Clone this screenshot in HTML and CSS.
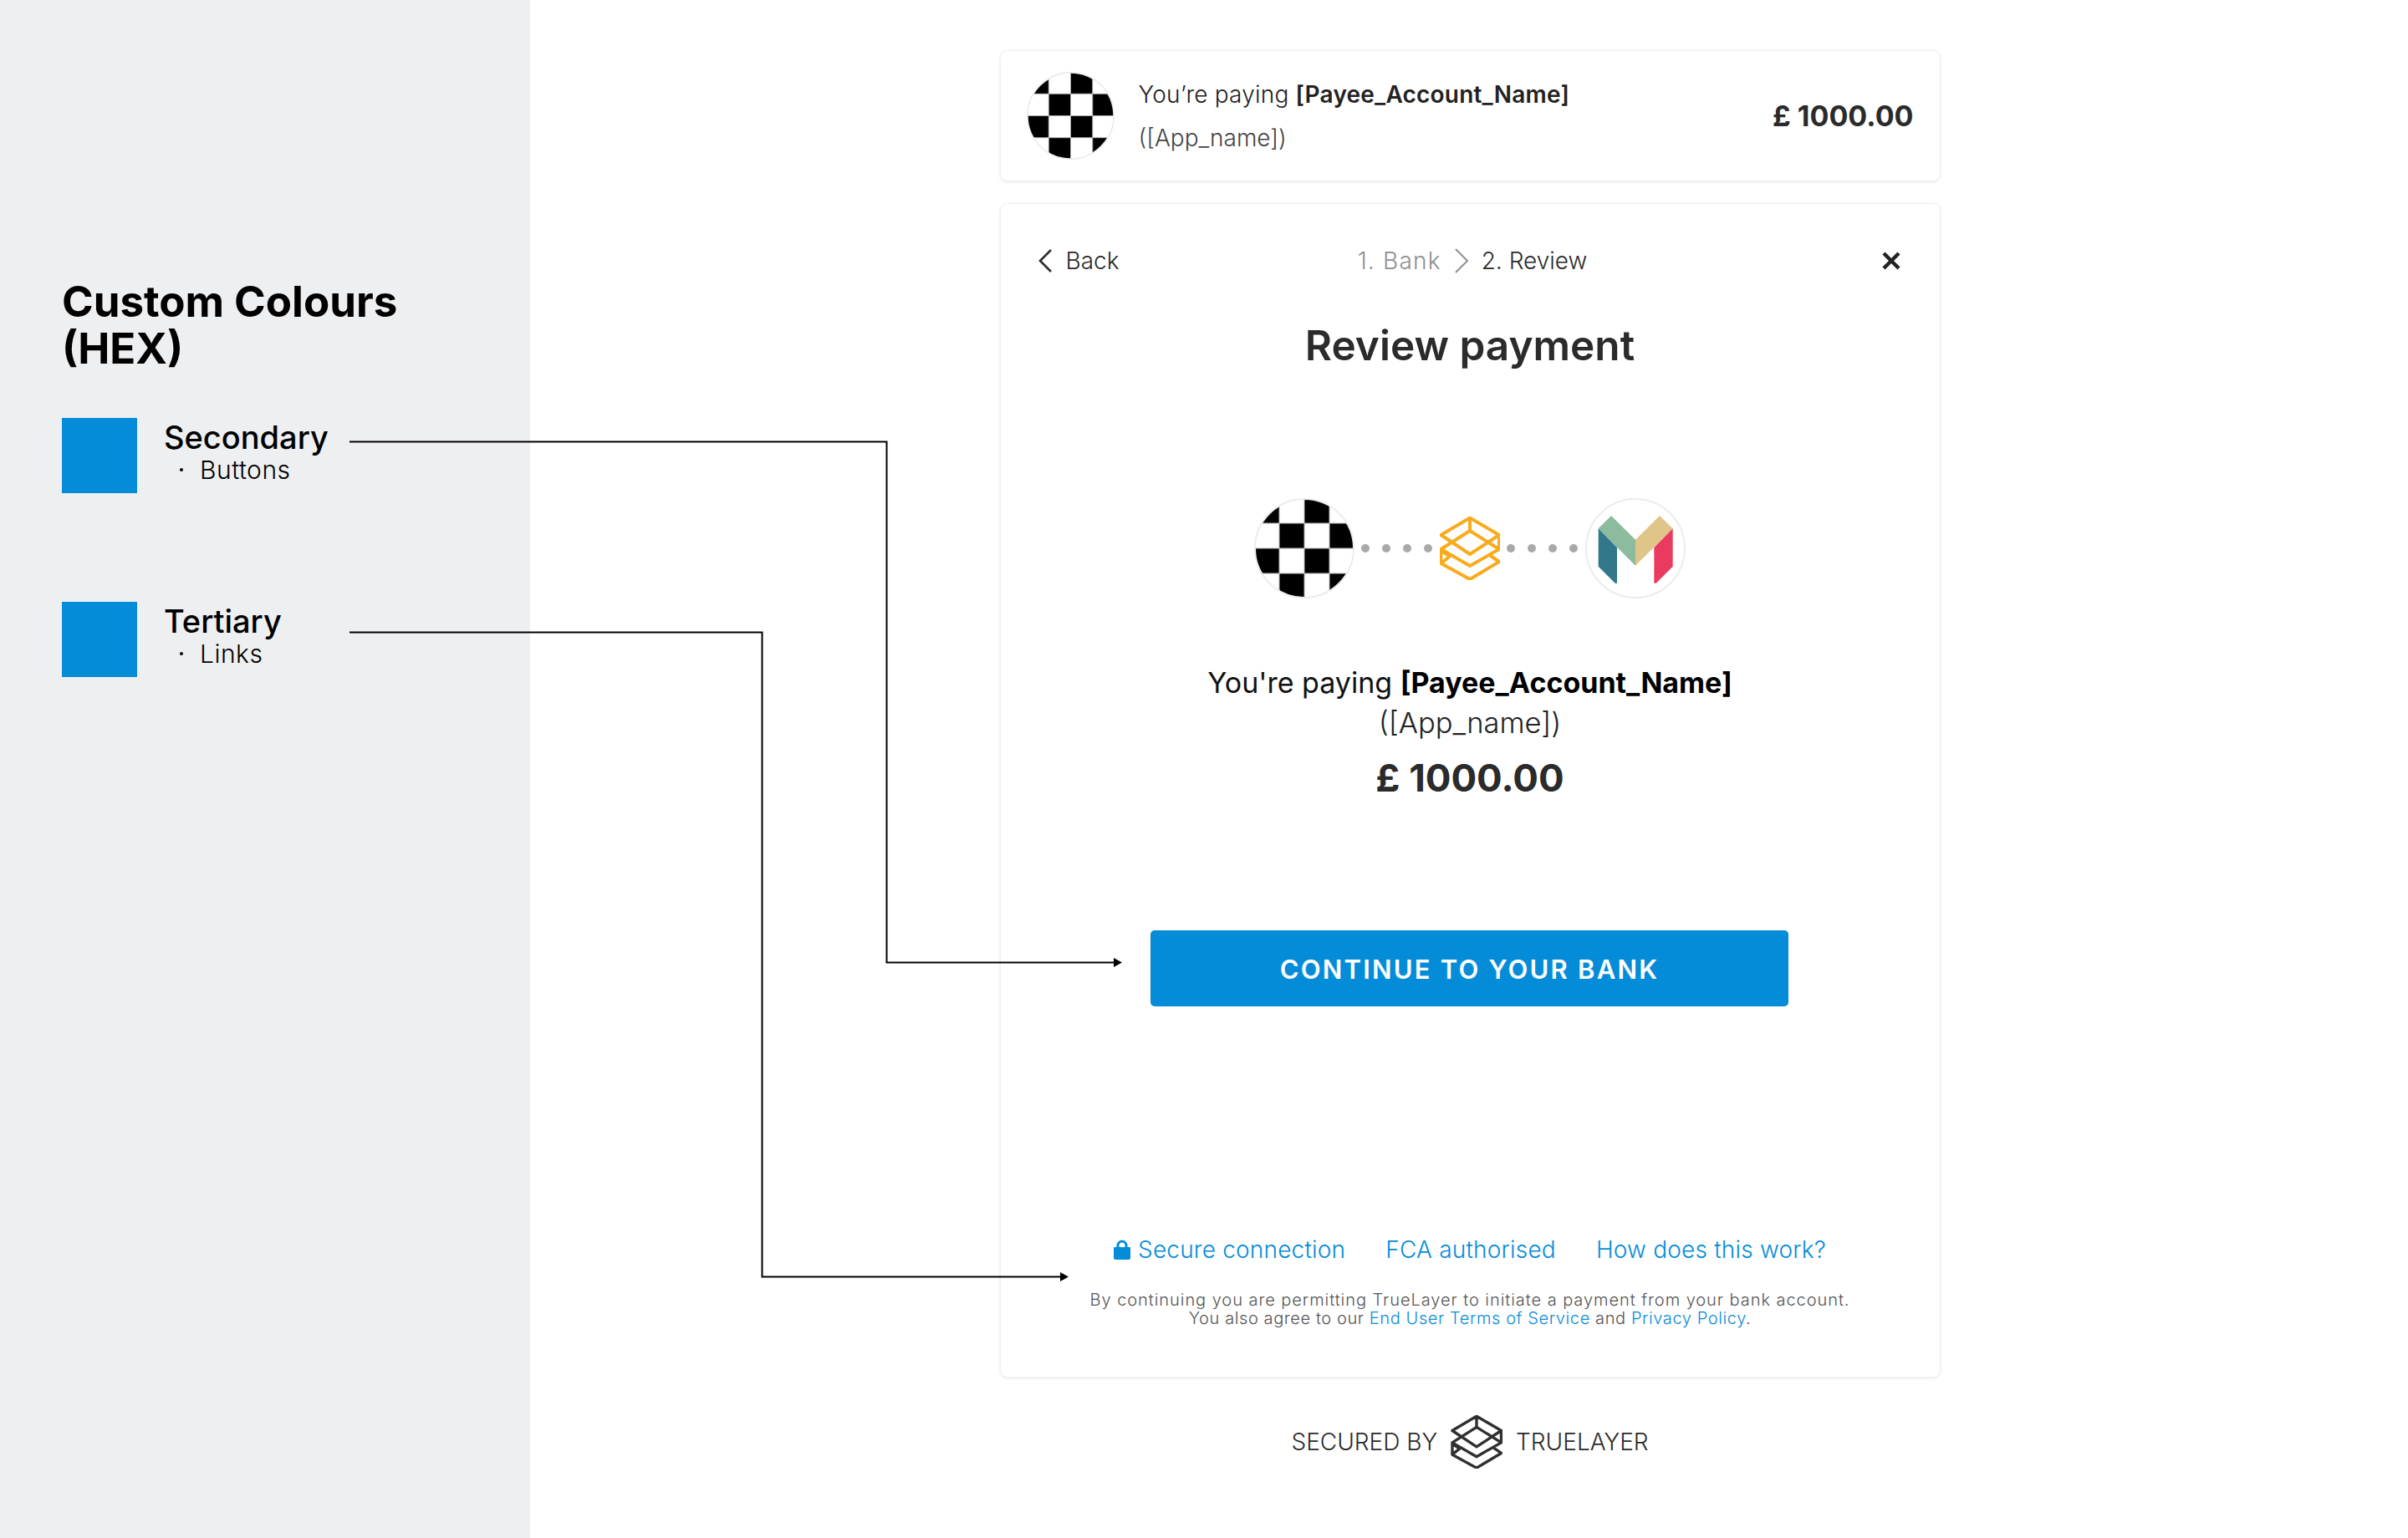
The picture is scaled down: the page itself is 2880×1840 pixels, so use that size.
FILE: index.html
```html
<!DOCTYPE html>
<html lang="en">
<head>
<meta charset="utf-8">
<title>Custom Colours</title>
<link rel="stylesheet" href="styles.css">
</head>
<body>
<aside class="side">
  <h1 class="side-title">Custom Colours<br>(HEX)</h1>
  <div class="swatch-row">
    <div class="swatch"></div>
    <div class="swatch-text">
      <div class="swatch-name">Secondary</div>
      <div class="swatch-use"><i class="dot"></i>Buttons</div>
    </div>
  </div>
  <div class="swatch-row">
    <div class="swatch"></div>
    <div class="swatch-text">
      <div class="swatch-name">Tertiary</div>
      <div class="swatch-use"><i class="dot"></i>Links</div>
    </div>
  </div>
</aside>

<main class="main">
  <section class="card summary">
    <svg class="logo-sm" viewBox="0 0 120 120"><use href="#checker"/></svg>
    <div class="summary-text">
      <div class="summary-line">You’re paying <b>[Payee_Account_Name]</b></div>
      <div class="summary-app">([App_name])</div>
    </div>
    <div class="summary-amount">£ 1000.00</div>
  </section>

  <section class="card review">
    <div class="review-head">
      <div class="back">
        <svg class="chev" viewBox="0 0 18 30"><path d="M16 2 3 15l13 13"/></svg>
        <span>Back</span>
      </div>
      <div class="steps">
        <span class="step-off">1. Bank</span>
        <svg class="chev-step" viewBox="0 0 20 32"><path d="M3 2l14 14L3 30"/></svg>
        <span>2. Review</span>
      </div>
      <div class="close-wrap">
        <svg class="close" viewBox="0 0 24 24"><path d="M3 3l18 18M21 3 3 21"/></svg>
      </div>
    </div>

    <h2 class="review-title">Review payment</h2>

    <div class="flow">
      <svg class="logo-lg" viewBox="0 0 120 120">
        <defs>
          <clipPath id="round"><circle cx="60" cy="60" r="59"/></clipPath>
          <g id="checker">
            <g clip-path="url(#round)">
              <rect width="120" height="120" fill="#fff"/>
              <path d="M0 0h30v30H0zM60 0h30v30H60zM30 30h30v30H30zM90 30h30v30H90zM0 60h30v30H0zM60 60h30v30H60zM30 90h30v30H30zM90 90h30v30H90z" fill="#000"/>
              <path d="M0 30h120M0 60h120M0 90h120M30 0v120M60 0v120M90 0v120" stroke="#b4b4b4" stroke-width="1" fill="none"/>
            </g>
            <circle cx="60" cy="60" r="59" fill="none" stroke="#ececec" stroke-width="2"/>
          </g>
        </defs>
        <use href="#checker"/>
      </svg>
      <div class="dots"><i></i><i></i><i></i><i></i></div>
      <svg class="layers layers-orange" viewBox="0 0 72 76">
        <defs>
          <g id="layers-mark">
            <path d="M36 1.5 71 22v17L36 59 1.5 39l34.5-22 35 22M1.5 22 36 1.500M1.500 22 36 45l35-23M36 1.500V17M1.500 39v17L36 75l35-21-10-7M1.500 56l10-8M2 41l9 6"/>
          </g>
        </defs>
        <use href="#layers-mark"/>
      </svg>
      <div class="dots"><i></i><i></i><i></i><i></i></div>
      <svg class="logo-lg" viewBox="48 33 360 360">
        <circle cx="228" cy="213" r="177" fill="#fff" stroke="#ececec" stroke-width="6"/>
        <path fill="#8dbb9d" d="M95 142l46-46 87 86v93z"/>
        <path fill="#dfc587" d="M228 182l87-86 47 46-134 133z"/>
        <path fill="#33788a" d="M95 142l67 68v128h-7l-60-60z"/>
        <path fill="#ea3a60" d="M295 210l67-68v136l-60 60h-7z"/>
      </svg>
    </div>

    <div class="pay-line">You're paying <b>[Payee_Account_Name]</b></div>
    <div class="pay-app">([App_name])</div>
    <div class="pay-amount">£ 1000.00</div>

    <div class="cta-wrap"><button class="cta">CONTINUE TO YOUR BANK</button></div>

    <nav class="links">
      <a class="link"><svg class="lock" viewBox="0 0 20 24"><path class="lock-body" d="M1 9h18a1 1 0 0 1 1 1v12a2 2 0 0 1-2 2H2a2 2 0 0 1-2-2V10a1 1 0 0 1 1-1z"/><path class="lock-loop" d="M5 10V7a5 5 0 0 1 10 0v3"/></svg>Secure connection</a>
      <a class="link">FCA authorised</a>
      <a class="link">How does this work?</a>
    </nav>

    <p class="legal"><span class="legal-first">By continuing you are permitting TrueLayer to initiate a payment from your bank account.</span><br>You also agree to our <a>End User Terms of Service</a> and <a>Privacy Policy</a>.</p>
  </section>

  <footer class="secured">
    <span>SECURED BY</span>
    <svg class="layers layers-dark" viewBox="0 0 72 76"><use href="#layers-mark"/></svg>
    <span>TRUELAYER</span>
  </footer>
</main>

<svg class="connectors" viewBox="0 0 2880 1840">
  <path class="wire" d="M418 528.500H1060.500V1151.500H1336"/>
  <path class="wire" d="M418 756.500H911.500V1527.500H1272"/>
  <path class="tip" d="M1332 1146l10 5.500-10 5.500z"/>
  <path class="tip" d="M1268 1522l10 5.500-10 5.500z"/>
</svg>
</body>
</html>
```
FILE: styles.css
```css
* { box-sizing: border-box; }
html, body { margin: 0; height: 1840px; overflow: hidden; }
body {
  position: relative;
  display: flex;
  width: 2880px;
  background: #fff;
  color: #2b2b2b;
  font-family: Inter, "Noto Sans", sans-serif;
}

/* left panel */
.side {
  width: 634px;
  height: 1840px;
  padding: 333px 0 0 74px;
  background: #eeeff1;
  color: #000;
}
.side-title {
  margin: 0 0 55px;
  font-size: 51px;
  line-height: 56px;
  font-weight: 700;
}
.swatch-row {
  display: flex;
  gap: 32px;
  height: 90px;
  margin-bottom: 130px;
}
.swatch { width: 90px; height: 90px; background: #058cd8; }
.swatch-text { padding-top: 3px; }
.swatch-name { font-size: 38px; line-height: 40px; font-weight: 500; }
.swatch-use {
  display: flex;
  align-items: center;
  font-size: 30px;
  line-height: 38px;
  font-weight: 300;
  letter-spacing: .5px;
}
.dot {
  width: 4px;
  height: 4px;
  margin: 0 20px 0 19px;
  border-radius: 50%;
  background: #000;
}

/* main column */
.main {
  flex: 1;
  display: flex;
  flex-direction: column;
  align-items: center;
  padding: 61px 0 0 2px;
}
.card {
  width: 1123px;
  background: #fff;
  border-radius: 8px;
  box-shadow: 0 0 0 1px #f0f0f0, 0 1px 4px rgba(0, 0, 0, .14);
}

/* summary */
.summary {
  display: flex;
  align-items: center;
  height: 155px;
  padding: 0 31px;
  margin-bottom: 28px;
}
.logo-sm { width: 105px; height: 105px; margin-right: 29px; flex: none; }
.summary-text { flex: 1; font-size: 28px; font-weight: 300; }
.summary-line { line-height: 52px; color: #222; letter-spacing: .2px; }
.summary-line b { font-weight: 600; }
.summary-app { line-height: 52px; color: #444; }
.summary-amount { font-size: 34px; font-weight: 700; }

/* review */
.review { height: 1403px; padding-top: 48px; }
.review-head {
  display: grid;
  grid-template-columns: 1fr auto 1fr;
  align-items: center;
  height: 40px;
  padding: 0 46px 0 44px;
  font-size: 28px;
  font-weight: 300;
}
.back, .steps { display: flex; align-items: center; }
.back { gap: 16px; }
.chev { width: 18px; height: 30px; }
.chev path, .chev-step path, .close path { fill: none; }
.chev path { stroke: #2b2b2b; stroke-width: 2.600; }
.steps { gap: 14px; padding-left: 8px; }
.step-off { color: #8f8f8f; letter-spacing: 1.200px; }
.chev-step { width: 20px; height: 32px; }
.chev-step path { stroke: #8f8f8f; stroke-width: 2; }
.close-wrap { display: flex; justify-content: flex-end; }
.close { width: 24px; height: 24px; }
.close path { stroke: #222; stroke-width: 4.500; }

.review-title {
  margin: 51px 0 0;
  text-align: center;
  font-size: 49.500px;
  line-height: 60px;
  font-weight: 600;
}
.flow {
  display: flex;
  align-items: center;
  justify-content: center;
  margin-top: 153px;
  height: 120px;
}
.logo-lg { width: 120px; height: 120px; flex: none; }
.dots { display: flex; gap: 15px; padding: 0 9px 0 8px; }
.dots i { width: 10px; height: 10px; border-radius: 50%; background: #a9a9a9; }
.layers path, .layers use { fill: none; }
.layers { flex: none; stroke-linejoin: round; stroke-linecap: round; }
.layers-orange { width: 72px; height: 76px; stroke: #f9ab1f; stroke-width: 4; fill: none; }
.layers-dark { width: 62px; height: 64px; stroke: #2f2f2f; stroke-width: 4; fill: none; }

.pay-line, .pay-app, .pay-amount { text-align: center; }
.pay-line { margin-top: 77px; font-size: 34px; line-height: 48px; font-weight: 400; color: #111; }
.pay-line b { font-weight: 700; color: #000; }
.pay-app { font-size: 34.500px; line-height: 48px; font-weight: 300; color: #222; }
.pay-amount { margin-top: 10px; font-size: 45.500px; line-height: 64px; font-weight: 700; }

.cta-wrap { display: flex; justify-content: center; margin-top: 150px; }
.cta {
  width: 763px;
  height: 91px;
  margin-left: -1px;
  border: 0;
  border-radius: 5px;
  padding: 1px 0 0;
  background: #058cd8;
  color: #fff;
  font-family: inherit;
  font-size: 31px;
  font-weight: 600;
  letter-spacing: 2.200px;
}

.links {
  display: flex;
  justify-content: center;
  gap: 48px;
  margin-top: 271px;
  height: 40px;
  line-height: 40px;
  font-size: 28px;
  font-weight: 300;
  letter-spacing: .2px;
  color: #058cd8;
}
.link { display: flex; align-items: center; gap: 9px; }
.lock { width: 20px; height: 24px; }
.lock-body { fill: #058cd8; }
.lock-loop { fill: none; stroke: #058cd8; stroke-width: 3; }

.legal {
  margin: 29px 0 0;
  text-align: center;
  font-size: 20px;
  line-height: 22px;
  font-weight: 300;
  letter-spacing: .6px;
  color: #555;
}
.legal-first { letter-spacing: .95px; }
.legal a { color: #058cd8; }

.secured {
  display: flex;
  align-items: center;
  gap: 16px;
  margin-top: 46px;
  font-size: 28px;
  font-weight: 300;
  color: #2b2b2b;
}

/* annotation wires over the page */
.connectors {
  position: absolute;
  left: 0;
  top: 0;
  width: 2880px;
  height: 1840px;
  pointer-events: none;
}
.wire { fill: none; stroke: #000; stroke-width: 2; }
.tip { fill: #000; }
```
